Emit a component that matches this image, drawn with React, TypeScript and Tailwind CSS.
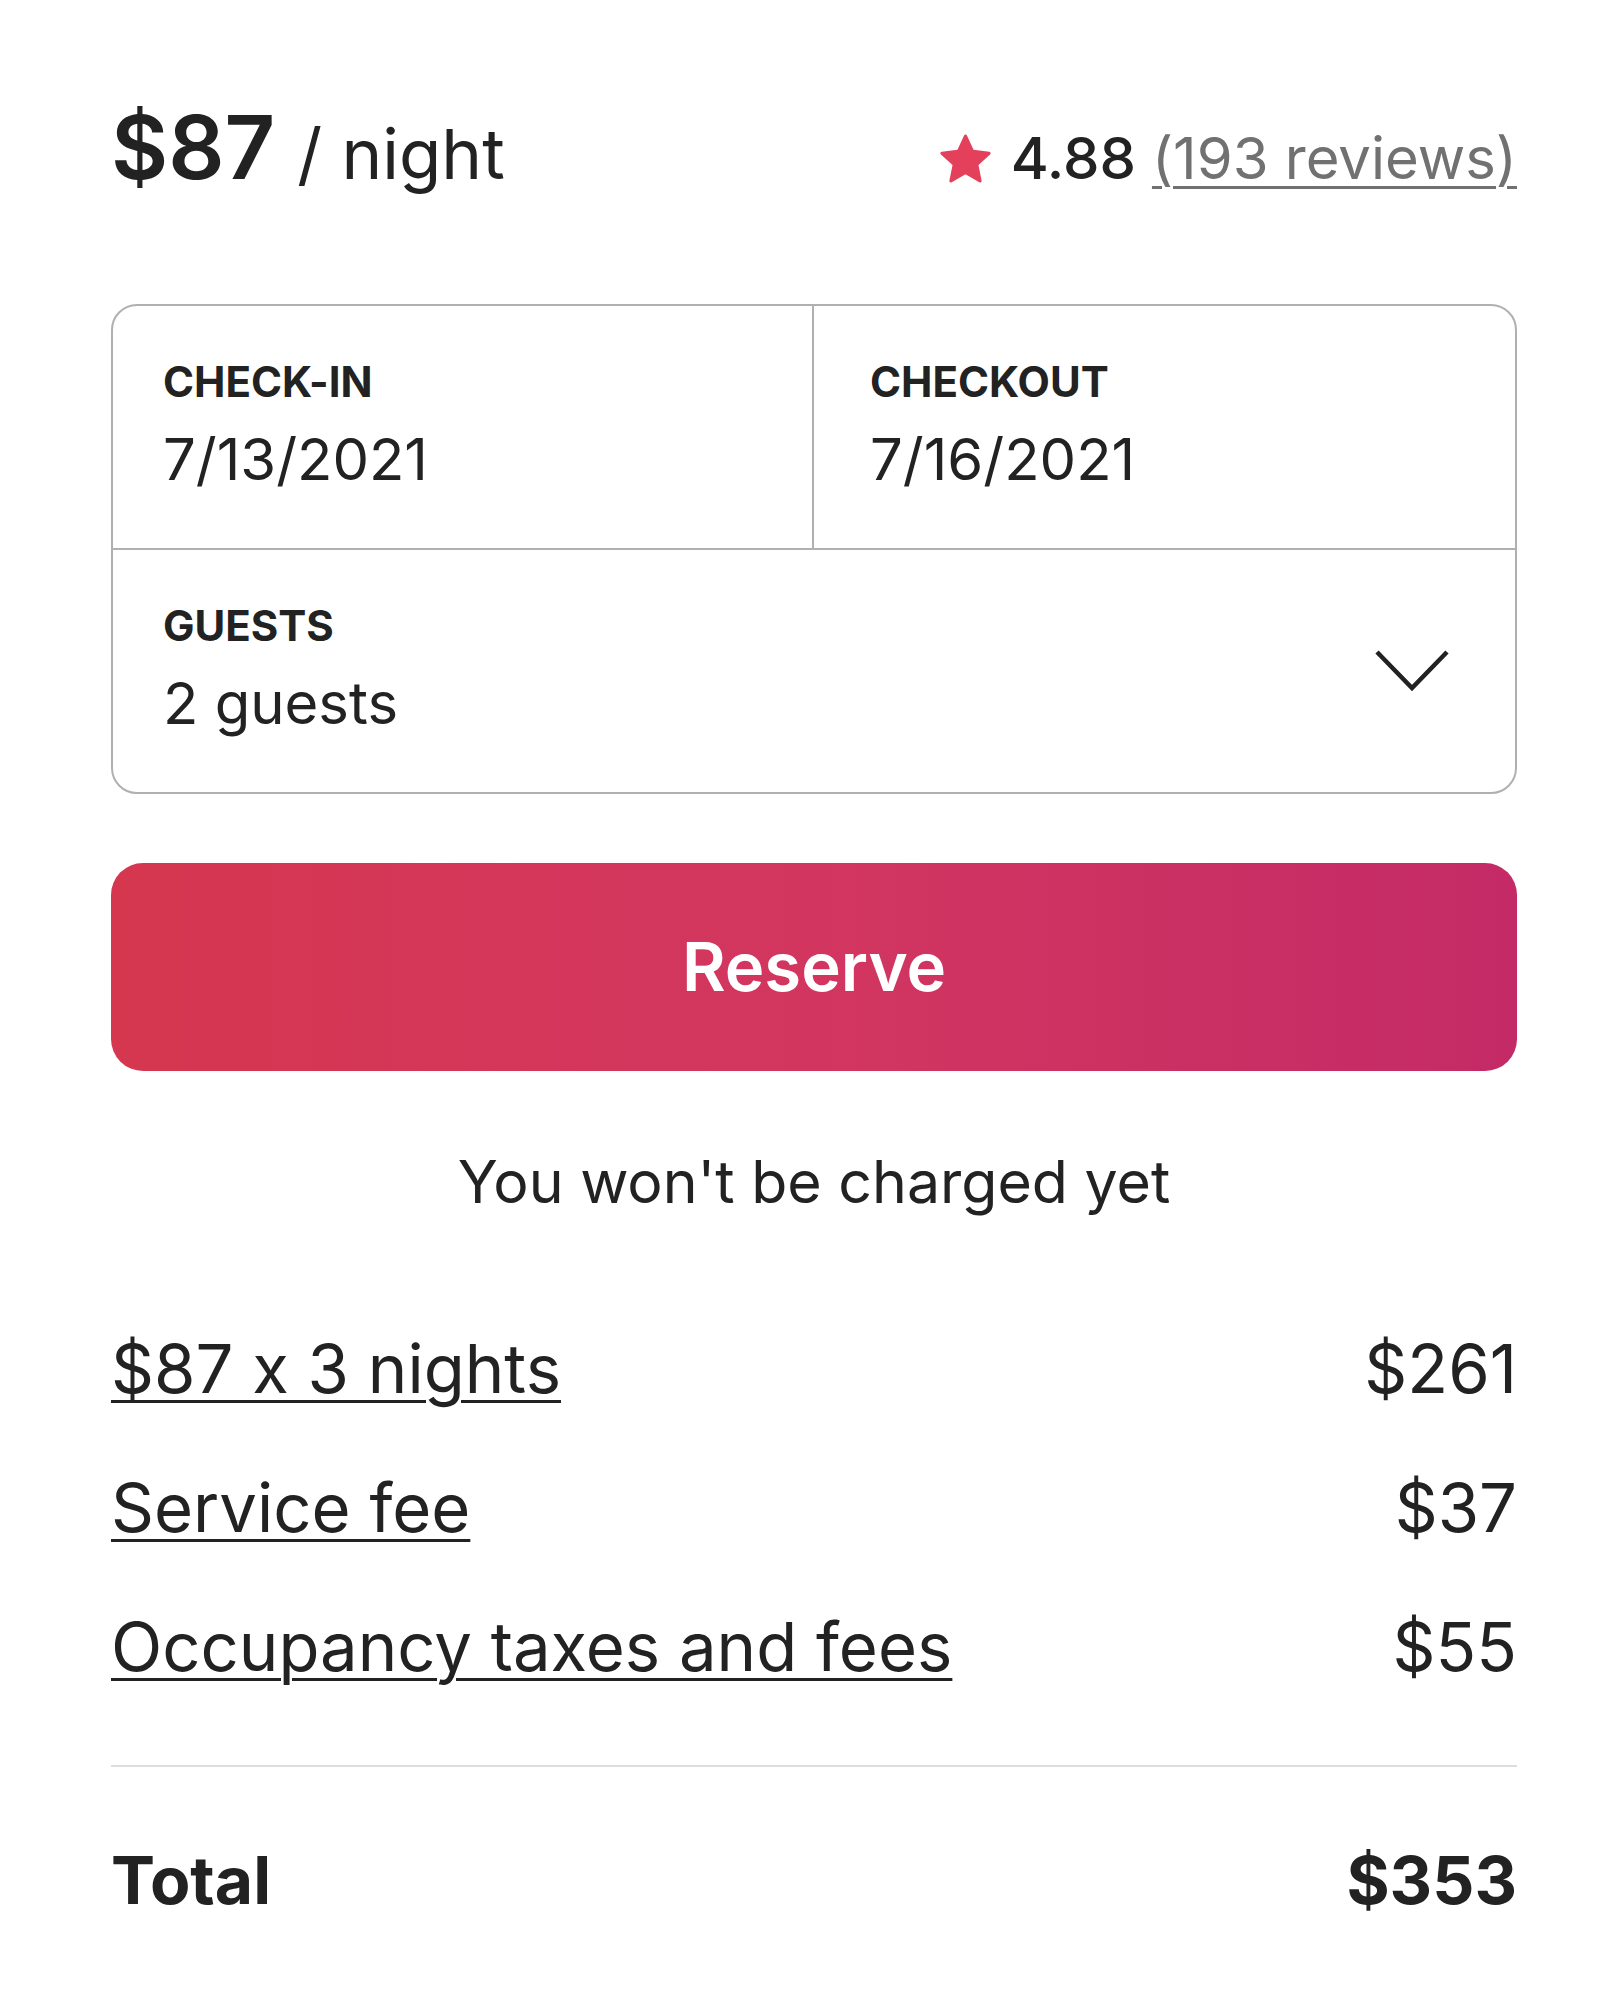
import React from "react";

const font = { fontFamily: '"Inter", "Noto Sans", sans-serif' };

function Star() {
  return (
    <svg viewBox="0 0 32 32" className="w-[51px] h-[51px]" fill="#e4405c" aria-hidden="true">
      <path d="M15.094 1.579l-4.124 8.885-9.86 1.27a1 1 0 0 0-.542 1.736l7.293 6.565-1.965 9.852a1 1 0 0 0 1.483 1.061L16 25.951l8.625 4.997a1 1 0 0 0 1.482-1.06l-1.965-9.853 7.293-6.565a1 1 0 0 0-.541-1.735l-9.86-1.271-4.127-8.885a1 1 0 0 0-1.814 0z" />
    </svg>
  );
}

function Chevron() {
  return (
    <svg viewBox="0 0 74 44" className="w-[74px] h-[44px]" fill="none" stroke="#222222" strokeWidth="4.5" strokeLinecap="butt" strokeLinejoin="miter" aria-hidden="true">
      <polyline points="2,3 37,39 72,3" />
    </svg>
  );
}

function Cell({ label, value, className = "" }: { label: string; value: string; className?: string }) {
  return (
    <div className={`flex flex-col pt-[51px] pb-[55px] ${className}`}>
      <div className="text-[42px] leading-[50px] font-bold text-[#222222]">{label}</div>
      <div className="mt-[18px] text-[58px] leading-[68px] text-[#222222]">{value}</div>
    </div>
  );
}

function Row({ label, value }: { label: string; value: string }) {
  return (
    <div className="flex justify-between items-baseline text-[67px] leading-[80px] text-[#222222]">
      <span className="underline decoration-[3px] underline-offset-[7px]">{label}</span>
      <span>{value}</span>
    </div>
  );
}

export default function App() {
  return (
    <div className="w-[1616px] h-[1999px] bg-white [font-variant-ligatures:no-contextual]" style={font}>
      <div className="ml-[111px] w-[1406px] pt-[103px] flex flex-col">
        <div className="flex items-baseline justify-between">
          <div className="flex items-baseline">
            <span className="text-[88px] leading-[88px] font-semibold text-[#222222]">$87</span>
            <span className="ml-[22px] text-[69px] leading-[74px] text-[#222222]">/ night</span>
          </div>
          <div className="flex items-baseline">
            <span className="self-center mr-[20px] flex"><Star /></span>
            <span className="text-[58px] leading-[60px] font-medium text-[#222222]">4.88</span>
            <span className="ml-[16px] text-[58px] leading-[60px] text-[#717171] underline decoration-[3px] underline-offset-[7px]">(193 reviews)</span>
          </div>
        </div>

        <div className="mt-[113px] border-[2px] border-[#b0b0b0] rounded-[26px] overflow-hidden">
          <div className="grid grid-cols-2 border-b-[2px] border-[#b0b0b0]">
            <Cell label="CHECK-IN" value="7/13/2021" className="pl-[50px] border-r-[2px] border-[#b0b0b0]" />
            <Cell label="CHECKOUT" value="7/16/2021" className="pl-[56px]" />
          </div>
          <div className="flex items-center justify-between pr-[66px]">
            <Cell label="GUESTS" value="2 guests" className="pl-[50px]" />
            <Chevron />
          </div>
        </div>

        <button className="mt-[69px] h-[208px] w-full rounded-[32px] bg-gradient-to-r from-[#d5374f] via-[#d23660] to-[#c42a66] text-white text-[67px] font-semibold">
          Reserve
        </button>

        <div className="mt-[76px] text-center text-[59px] leading-[70px] text-[#222222]">You won't be charged yet</div>

        <div className="mt-[112px] flex flex-col gap-[59px]">
          <Row label="$87 x 3 nights" value="$261" />
          <Row label="Service fee" value="$37" />
          <Row label="Occupancy taxes and fees" value="$55" />
        </div>

        <div className="mt-[78px] h-[2px] bg-[#dddddd]" />

        <div className="mt-[73px] flex justify-between items-baseline text-[66px] leading-[80px] font-bold text-[#222222]">
          <span>Total</span>
          <span>$353</span>
        </div>
      </div>
    </div>
  );
}
